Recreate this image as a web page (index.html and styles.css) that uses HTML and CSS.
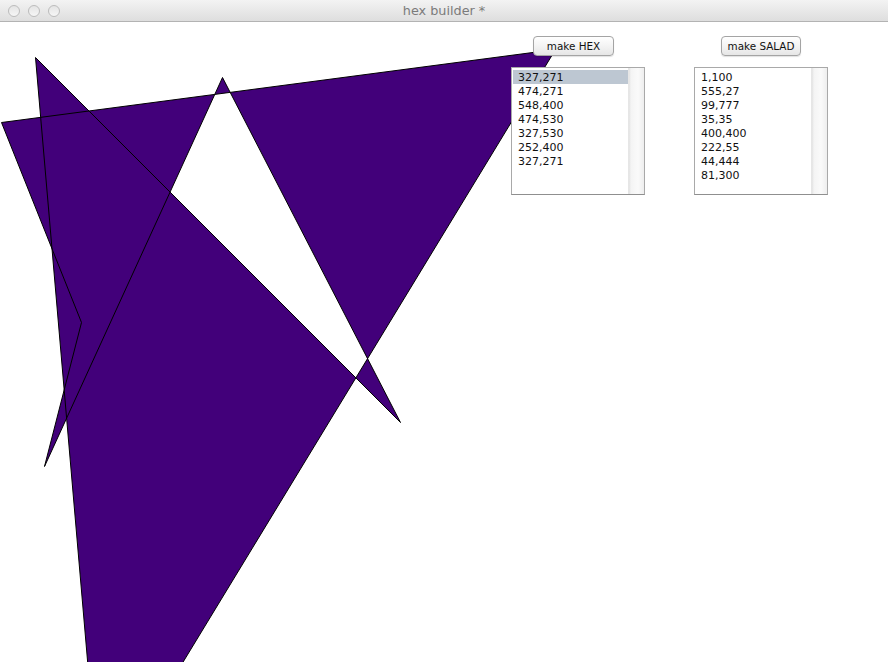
FILE: index.html
```html
<!DOCTYPE html>
<html lang="en">
<head>
    <meta charset="UTF-8">
    <title>hex builder *</title>
    <link rel="stylesheet" href="styles.css">
</head>
<body>
    <div class="window">
        <div class="titlebar">
            <div class="lights">
                <span class="light"></span>
                <span class="light"></span>
                <span class="light"></span>
            </div>
            <div class="title">hex builder *</div>
            <div class="spacer"></div>
        </div>

        <div class="content">
            <!-- the salad polygon, filled with the non-zero rule -->
            <svg class="canvas" width="888" height="640" viewBox="0 0 888 640">
                <polygon class="shape" transform="translate(0.5 0.5)"
                         points="1,100 555,27 99,777 35,35 400,400 222,55 44,444 81,300"/>
            </svg>

            <div class="controls">
                <div class="column">
                    <button class="btn btn-hex">make HEX</button>
                    <div class="list">
                        <ul class="items">
                            <li class="selected">327,271</li>
                            <li>474,271</li>
                            <li>548,400</li>
                            <li>474,530</li>
                            <li>327,530</li>
                            <li>252,400</li>
                            <li>327,271</li>
                        </ul>
                        <div class="scrollbar"></div>
                    </div>
                </div>

                <div class="column">
                    <button class="btn btn-salad">make SALAD</button>
                    <div class="list">
                        <ul class="items">
                            <li>1,100</li>
                            <li>555,27</li>
                            <li>99,777</li>
                            <li>35,35</li>
                            <li>400,400</li>
                            <li>222,55</li>
                            <li>44,444</li>
                            <li>81,300</li>
                        </ul>
                        <div class="scrollbar"></div>
                    </div>
                </div>
            </div>
        </div>
    </div>
</body>
</html>
```

FILE: styles.css
```css
* {
    margin: 0;
    padding: 0;
    box-sizing: border-box;
}

body {
    font-family: 'DejaVu Sans', Verdana, sans-serif;
    background: #fff;
    width: 888px;
    height: 662px;
    overflow: hidden;
}

.window {
    display: flex;
    flex-direction: column;
    width: 888px;
    height: 662px;
}

.titlebar {
    height: 22px;
    display: grid;
    grid-template-columns: 1fr auto 1fr;
    align-items: center;
    background: linear-gradient(#f3f3f3, #dedede);
    border-bottom: 1px solid #b3b3b3;
}

.lights {
    display: flex;
    gap: 8px;
    padding-left: 8px;
}

.light {
    width: 12px;
    height: 12px;
    border-radius: 50%;
    border: 1px solid #bcbcbc;
    background: linear-gradient(#e4e4e4, #f6f6f6);
}

.title {
    font-size: 12.8px;
    color: #7b7b7b;
    line-height: 21px;
}

.content {
    flex: 1;
    position: relative;
    overflow: hidden;
}

.canvas {
    position: absolute;
    left: 0;
    top: 0;
}

.shape {
    fill: #42007a;
    fill-rule: nonzero;
    stroke: #000;
    stroke-width: 1;
}

.controls {
    position: relative;
    display: flex;
    gap: 49px;
    padding: 14px 0 0 511px;
}

.column {
    width: 134px;
    display: flex;
    flex-direction: column;
    align-items: flex-start;
    gap: 11px;
}

.btn {
    height: 20px;
    font-family: 'DejaVu Sans', Verdana, sans-serif;
    font-size: 10.4px;
    color: #111;
    background: linear-gradient(#ffffff, #f1f1f1 60%, #e6e6e6);
    border: 1px solid #a4a4a4;
    border-radius: 4px;
    box-shadow: 0 1px 1px rgba(0, 0, 0, 0.12);
}

.btn-hex {
    width: 81px;
    margin-left: 22px;
}

.btn-salad {
    width: 80px;
    margin-left: 27px;
}

.list {
    width: 134px;
    height: 128px;
    display: flex;
    background: #fff;
    border: 1px solid #a9a9a9;
    border-bottom-color: #8f8f8f;
}

.items {
    flex: 1;
    list-style: none;
    padding: 2px 0 0 1px;
    font-size: 11px;
    color: #111;
}

.items li {
    height: 14px;
    line-height: 16px;
    padding-left: 5px;
}

.items li.selected {
    background: #bdc7d2;
}

.scrollbar {
    width: 16px;
    background: linear-gradient(90deg, #e2e2e2, #f4f4f4 2px, #fafafa 60%, #eeeeee);
    border-left: 1px solid #e6e6e6;
}
```
